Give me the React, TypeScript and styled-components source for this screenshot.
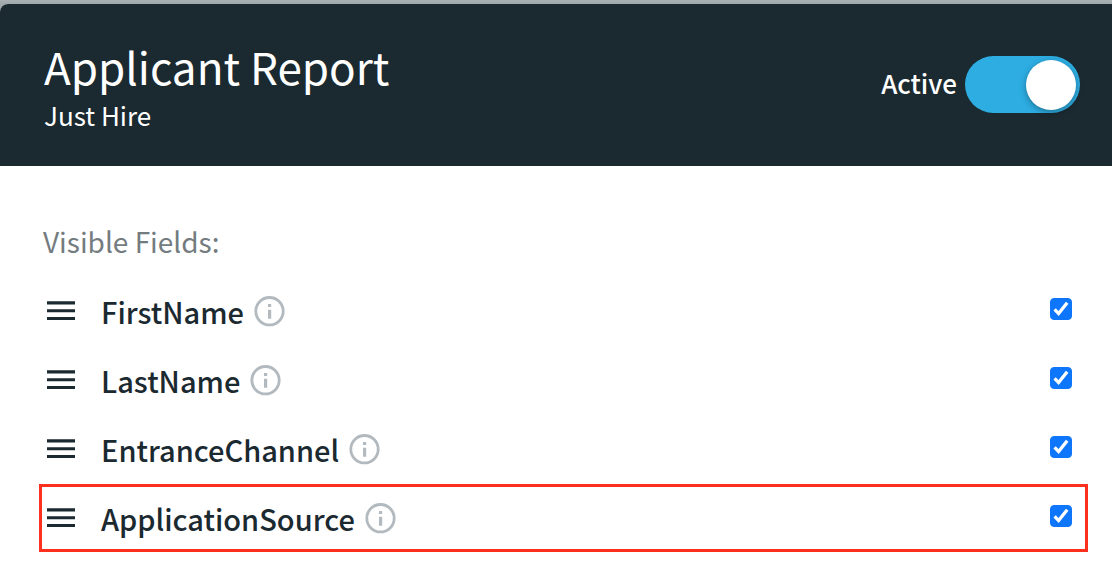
import React, { useState } from "react";
import styled, { createGlobalStyle } from "styled-components";

const ink = "#1b2930";

const GlobalStyle = createGlobalStyle`
  * { box-sizing: border-box; }
  body {
    margin: 0;
    background: #ffffff;
    color: ${ink};
    font-family: "Noto Sans CJK SC", "Noto Sans", sans-serif;
  }
`;

const Backdrop = styled.div`
  background: linear-gradient(to bottom, #aab2b4, #a0a8ab 4px);
  padding-top: 4px;
`;

const Panel = styled.main`
  background: #ffffff;
  border-top-left-radius: 8px;
`;

const Header = styled.header`
  display: flex;
  align-items: flex-start;
  justify-content: space-between;
  min-height: 162px;
  padding: 30px 32px 32px 44px;
  border-top-left-radius: 8px;
  background: ${ink};
  color: #ffffff;
`;

const Title = styled.h1`
  margin: 0 0 2px;
  font-size: 44px;
  line-height: 64px;
  font-weight: 400;
`;

const Subtitle = styled.p`
  margin: 0;
  font-size: 26px;
  line-height: 30px;
`;

const SwitchLabel = styled.label`
  display: flex;
  align-items: center;
  gap: 8px;
  margin-top: 22px;
  font-size: 26px;
  line-height: 30px;
  font-weight: 500;
  cursor: pointer;
`;

const SwitchText = styled.span`
  padding-bottom: 4px;
`;

const Switch = styled.input`
  appearance: none;
  display: flex;
  align-items: center;
  width: 115px;
  height: 57px;
  margin: 0;
  padding: 0 4px;
  border-radius: 29px;
  background: #8b9599;
  cursor: pointer;

  &::before {
    content: "";
    width: 50px;
    height: 50px;
    border-radius: 50%;
    background: #ffffff;
    box-shadow: 0 2px 6px rgba(0, 0, 0, 0.35);
  }
  &:checked {
    justify-content: flex-end;
    background: #2dade2;
  }
`;

const Fields = styled.section`
  padding: 53px 24px 12px 39px;
`;

const SectionTitle = styled.h2`
  margin: 0 0 14px;
  padding-left: 4px;
  color: #747c80;
  font-size: 28px;
  line-height: 44px;
  font-weight: 400;
`;

const FieldList = styled.ul`
  display: grid;
  gap: 1px;
  margin: 0;
  padding: 0;
  list-style: none;
`;

const FieldRow = styled.li<{ $highlighted: boolean }>`
  display: flex;
  align-items: center;
  height: 68px;
  padding: 0 13px 0 5px;
  border: 3px solid ${(p) => (p.$highlighted ? "#fc301c" : "transparent")};
`;

const PlainButton = styled.button`
  display: block;
  padding: 0;
  border: 0;
  background: none;
  color: inherit;

  svg { display: block; }
`;

const DragHandle = styled(PlainButton)`
  margin-right: 26px;
  cursor: grab;
`;

const InfoButton = styled(PlainButton)`
  margin: 0 auto 0 10px;
  color: #b2babf;
  cursor: help;
`;

const FieldName = styled.label`
  font-size: 29px;
  line-height: 44px;
  font-weight: 500;
`;

const CheckBox = styled.span`
  display: grid;
  margin-bottom: 4px;

  > * { grid-area: 1 / 1; }
  svg { pointer-events: none; }
  input:not(:checked) + svg { visibility: hidden; }
`;

const CheckInput = styled.input`
  appearance: none;
  width: 22px;
  height: 22px;
  margin: 0;
  border: 1px solid #8b9599;
  border-radius: 4px;

  &:checked {
    border-color: #0d76fb;
    background: #0d76fb;
  }
`;

const HandleIcon = () => (
  <svg width="28" height="20" viewBox="0 0 28 20" fill="currentColor" aria-hidden="true">
    <path d="M0 .2h28v3.2H0zM0 8.2h28v3H0zM0 16.1h28v3H0z" />
  </svg>
);

const InfoIcon = () => (
  <svg width="31" height="31" viewBox="0 0 31 31" fill="none" aria-hidden="true">
    <circle cx="15.5" cy="15.2" r="13.7" stroke="currentColor" strokeWidth="2.8" />
    <path d="M14 8h3.2v3H14zM14 13.8h3.2v9H14z" fill="currentColor" />
  </svg>
);

const CheckIcon = () => (
  <svg width="22" height="22" viewBox="0 0 22 22" fill="none" aria-hidden="true">
    <path d="M4.6 11.4 8.6 15.6 17.2 4.8" stroke="#ffffff" strokeWidth="3.3" />
  </svg>
);

type Field = { name: string; highlighted?: boolean };

const fields: Field[] = [
  { name: "FirstName" },
  { name: "LastName" },
  { name: "EntranceChannel" },
  { name: "ApplicationSource", highlighted: true },
];

function FieldItem({ name, highlighted = false }: Field) {
  const [visible, setVisible] = useState(true);
  return (
    <FieldRow $highlighted={highlighted}>
      <DragHandle type="button" aria-label={`Reorder ${name}`}>
        <HandleIcon />
      </DragHandle>
      <FieldName htmlFor={name}>{name}</FieldName>
      <InfoButton type="button" aria-label={`About ${name}`}>
        <InfoIcon />
      </InfoButton>
      <CheckBox>
        <CheckInput
          id={name}
          type="checkbox"
          checked={visible}
          onChange={(e) => setVisible(e.target.checked)}
        />
        <CheckIcon />
      </CheckBox>
    </FieldRow>
  );
}

export default function App() {
  const [active, setActive] = useState(true);
  return (
    <>
      <GlobalStyle />
      <Backdrop>
        <Panel>
          <Header>
            <div>
              <Title>Applicant Report</Title>
              <Subtitle>Just Hire</Subtitle>
            </div>
            <SwitchLabel>
              <SwitchText>Active</SwitchText>
              <Switch
                type="checkbox"
                role="switch"
                checked={active}
                onChange={(e) => setActive(e.target.checked)}
              />
            </SwitchLabel>
          </Header>
          <Fields>
            <SectionTitle>Visible Fields:</SectionTitle>
            <FieldList>
              {fields.map((field) => (
                <FieldItem key={field.name} {...field} />
              ))}
            </FieldList>
          </Fields>
        </Panel>
      </Backdrop>
    </>
  );
}
